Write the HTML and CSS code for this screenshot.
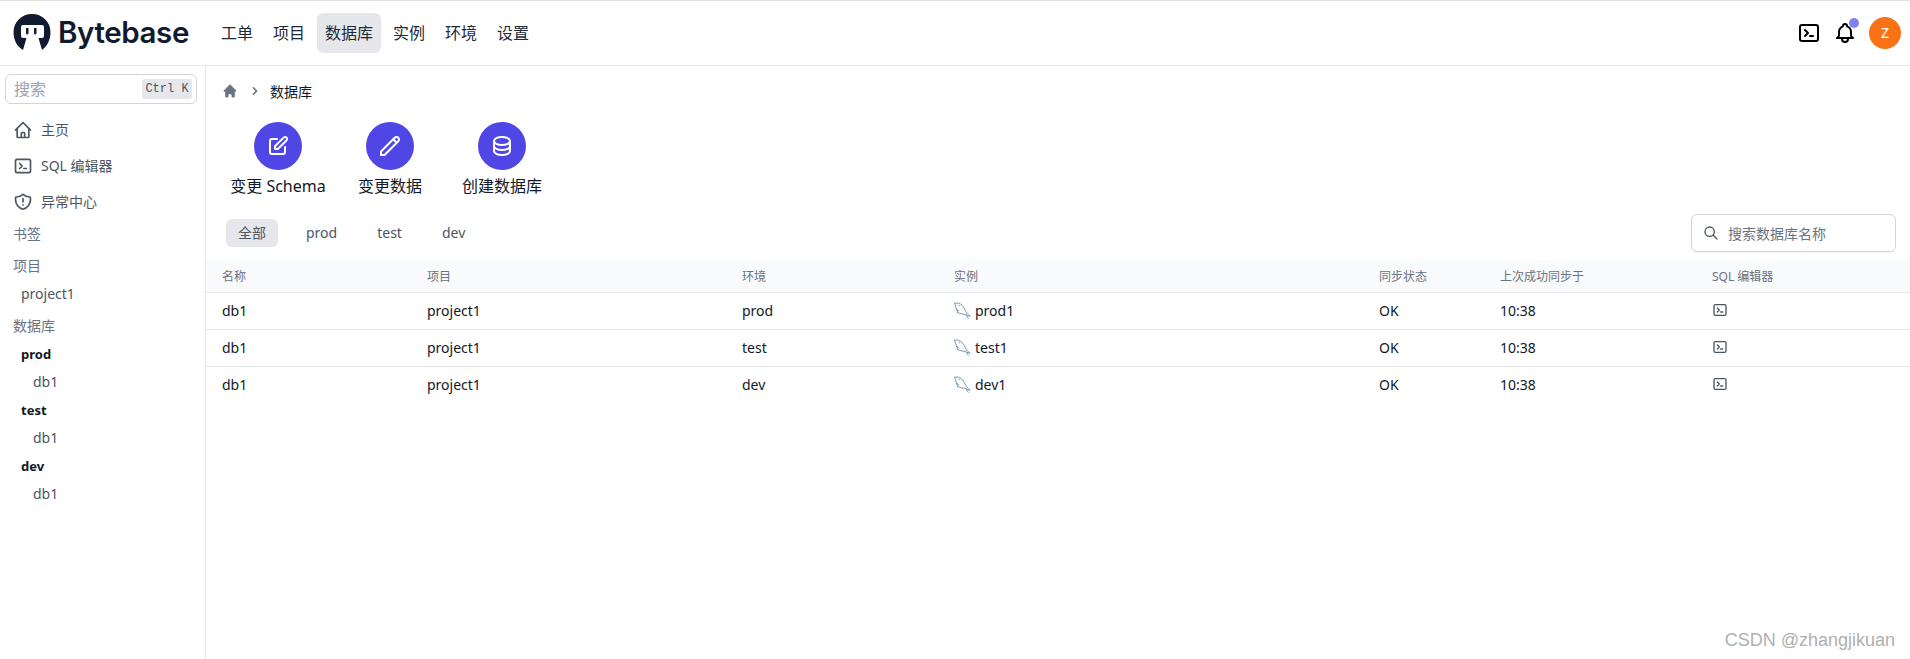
FILE: index.html
```html
<!DOCTYPE html>
<html lang="zh">
<head>
<meta charset="utf-8">
<title>Bytebase</title>
<link rel="stylesheet" href="styles.css">
</head>
<body>
<svg class="sprite" aria-hidden="true">
  <symbol id="i-term" viewBox="0 0 24 24"><path d="M8 9l3 3-3 3m5 0h3M5 20h14a2 2 0 002-2V6a2 2 0 00-2-2H5a2 2 0 00-2 2v12a2 2 0 002 2z"/></symbol>
  <symbol id="i-dolphin" viewBox="0 0 16 16"><path class="dolphin" d="M.6 1.200C3 .4 5.600 1.200 7.600 3.200c1.600 1.600 2.600 3.800 3.600 6 .8 1.600 2.200 2.600 4 4.200-1.400-.2-2.600-.6-3.400-1.200.2 1 .8 2 1.600 3.200M.6 1.200c.6 1.800 1 3.400 1.600 5 .4 1.200 1 2.600 1.400 3.800M3.600 10c1.200.4 2.400 1 3.800 1.200 1.400.2 2.800.4 4.200.9M2.600 6.800c.8.200 1.400.8 1.800 1.600M4.400 3c.2.300.4.500.8.600"/></symbol>
</svg>
<div class="app">
  <header class="topbar">
    <div class="brand">
      <svg class="logo" viewBox="0 0 38 36"><path fill-rule="evenodd" d="M10 36C4 32.500.5 26 .5 18a18.500 18 0 0137 0c0 8-3.500 14.500-8.500 18L25.500 24H29q2 0 2-2V13q0-2-2-2H10q-2 0-2 2v9q0 2 2 2h3.500zM13 14v5q0 1.500 1.200 1.500t1.300-1.500v-5zM21 14v5q0 1.500 1.200 1.500t1.300-1.500v-5z"/></svg>
      <span class="brand-name">Bytebase</span>
    </div>
    <nav class="mainnav">
      <a class="mainnav-item">工单</a>
      <a class="mainnav-item">项目</a>
      <a class="mainnav-item is-active">数据库</a>
      <a class="mainnav-item">实例</a>
      <a class="mainnav-item">环境</a>
      <a class="mainnav-item">设置</a>
    </nav>
    <div class="top-actions">
      <svg class="icon-top icon-term"><use href="#i-term"/></svg>
      <span class="bell">
        <svg class="icon-top" viewBox="0 0 24 24"><path d="M15 17h5l-1.405-1.405A2.032 2.032 0 0118 14.158V11a6.002 6.002 0 00-4-5.659V5a2 2 0 10-4 0v.341C7.670 6.165 6 8.388 6 11v3.159c0 .538-.214 1.055-.595 1.436L4 17h5m6 0v1a3 3 0 11-6 0v-1m6 0H9"/></svg>
        <i class="bell-dot"></i>
      </span>
      <span class="avatar">Z</span>
    </div>
  </header>
  <div class="body">
    <aside class="sidebar">
      <div class="side-search"><span class="side-search-text">搜索</span><kbd class="kbd">Ctrl K</kbd></div>
      <a class="side-link"><svg class="side-icon" viewBox="0 0 24 24"><path d="M3 12l2-2m0 0l7-7 7 7M5 10v10a1 1 0 001 1h3m10-11l2 2m-2-2v10a1 1 0 01-1 1h-3m-6 0a1 1 0 001-1v-4a1 1 0 011-1h2a1 1 0 011 1v4a1 1 0 001 1m-6 0h6"/></svg>主页</a>
      <a class="side-link"><svg class="side-icon"><use href="#i-term"/></svg>SQL 编辑器</a>
      <a class="side-link"><svg class="side-icon" viewBox="0 0 24 24"><path d="M12 8v4m0 3.500h.01M20.618 5.984A11.955 11.955 0 0112 2.944a11.955 11.955 0 01-8.618 3.040A12.020 12.020 0 003 9c0 5.591 3.824 10.290 9 11.622 5.176-1.332 9-6.030 9-11.622 0-1.042-.133-2.052-.382-3.016z"/></svg>异常中心</a>
      <div class="side-tree">
        <div class="side-head side-head-first">书签</div>
        <div class="side-head">项目</div>
        <div class="side-item">project1</div>
        <div class="side-head">数据库</div>
        <div class="side-env">prod</div>
        <div class="side-db">db1</div>
        <div class="side-env">test</div>
        <div class="side-db">db1</div>
        <div class="side-env">dev</div>
        <div class="side-db">db1</div>
      </div>
    </aside>
    <main class="content">
      <div class="crumbs">
        <svg class="crumb-home" viewBox="0 0 20 20"><path d="M10.707 2.293a1 1 0 00-1.414 0l-7 7a1 1 0 001.414 1.414L4 10.414V17a1 1 0 001 1h2a1 1 0 001-1v-2a1 1 0 011-1h2a1 1 0 011 1v2a1 1 0 001 1h2a1 1 0 001-1v-6.586l.293.293a1 1 0 001.414-1.414l-7-7z"/></svg>
        <svg class="crumb-sep" viewBox="0 0 20 20"><path d="M7.293 14.707a1 1 0 010-1.414L10.586 10 7.293 6.707a1 1 0 011.414-1.414l4 4a1 1 0 010 1.414l-4 4a1 1 0 01-1.414 0z"/></svg>
        <span class="crumb-label">数据库</span>
      </div>
      <div class="quick">
        <div class="quick-item"><span class="quick-circle"><svg viewBox="0 0 24 24"><path d="M11 5H6a2 2 0 00-2 2v11a2 2 0 002 2h11a2 2 0 002-2v-5m-1.414-9.414a2 2 0 112.828 2.828L11.828 15H9v-2.828l8.586-8.586z"/></svg></span><span class="quick-label">变更 Schema</span></div>
        <div class="quick-item"><span class="quick-circle"><svg viewBox="0 0 24 24"><path d="M15.232 5.232l3.536 3.536m-2.036-5.036a2.500 2.500 0 113.536 3.536L6.500 21.036H3v-3.572L16.732 3.732z"/></svg></span><span class="quick-label">变更数据</span></div>
        <div class="quick-item"><span class="quick-circle"><svg viewBox="0 0 24 24"><path d="M4 7v10c0 2.210 3.582 4 8 4s8-1.790 8-4V7M4 7c0 2.210 3.582 4 8 4s8-1.790 8-4M4 7c0-2.210 3.582-4 8-4s8 1.790 8 4m0 5c0 2.210-3.582 4-8 4s-8-1.790-8-4"/></svg></span><span class="quick-label">创建数据库</span></div>
      </div>
      <div class="filters">
        <div class="tabs">
          <a class="tab is-active">全部</a>
          <a class="tab">prod</a>
          <a class="tab">test</a>
          <a class="tab">dev</a>
        </div>
        <div class="db-search">
          <svg class="db-search-icon" viewBox="0 0 24 24"><path d="M21 21l-6-6m2-5a7 7 0 11-14 0 7 7 0 0114 0z"/></svg>
          <span class="db-search-text">搜索数据库名称</span>
        </div>
      </div>
      <table class="dbtable">
        <colgroup>
          <col class="c-name"><col class="c-project"><col class="c-env"><col class="c-inst"><col class="c-sync"><col class="c-last"><col class="c-sql">
        </colgroup>
        <thead>
          <tr><th>名称</th><th>项目</th><th>环境</th><th>实例</th><th>同步状态</th><th>上次成功同步于</th><th>SQL 编辑器</th></tr>
        </thead>
        <tbody>
          <tr><td>db1</td><td>project1</td><td>prod</td><td><span class="inst"><svg class="inst-icon"><use href="#i-dolphin"/></svg>prod1</span></td><td>OK</td><td>10:38</td><td><svg class="sql-icon"><use href="#i-term"/></svg></td></tr>
          <tr><td>db1</td><td>project1</td><td>test</td><td><span class="inst"><svg class="inst-icon"><use href="#i-dolphin"/></svg>test1</span></td><td>OK</td><td>10:38</td><td><svg class="sql-icon"><use href="#i-term"/></svg></td></tr>
          <tr><td>db1</td><td>project1</td><td>dev</td><td><span class="inst"><svg class="inst-icon"><use href="#i-dolphin"/></svg>dev1</span></td><td>OK</td><td>10:38</td><td><svg class="sql-icon"><use href="#i-term"/></svg></td></tr>
        </tbody>
      </table>
    </main>
  </div>
  <div class="watermark">CSDN @zhangjikuan</div>
</div>
</body>
</html>
```
FILE: styles.css
```css
* { box-sizing: border-box; }
html, body { margin: 0; height: 100%; background: #fff; overflow: hidden; }
body {
  font-family: "Noto Sans", "Noto Sans CJK SC", sans-serif;
  font-size: 14px;
  color: #111827;
}
.sprite { display: none; }
svg { fill: none; stroke: currentColor; stroke-width: 2; stroke-linecap: round; stroke-linejoin: round; flex: none; display: block; }

.app { position: relative; height: 659px; display: flex; flex-direction: column; border-top: 1px solid #e0e0e0; }

.topbar { height: 65px; flex: none; display: flex; align-items: center; border-bottom: 1px solid #e5e7eb; padding: 0 9px 1px 13px; }
.brand { display: flex; align-items: center; gap: 7px; width: 200px; margin-bottom: 2px; }
.logo { width: 38px; height: 36px; fill: #111a2e; stroke: none; }
.brand-name { font-family: Inter, sans-serif; font-size: 29.5px; line-height: 36px; font-weight: 600; color: #111a2e; letter-spacing: -.4px; }
.mainnav { display: flex; gap: 4px; }
.mainnav-item { padding: 0 8px; height: 40px; line-height: 40px; font-size: 16px; border-radius: 6px; color: #1f2937; }
.mainnav-item.is-active { background: #e5e7eb; }
.top-actions { margin-left: auto; display: flex; align-items: center; }
.icon-top { width: 24px; height: 24px; color: #000; }
.bell { position: relative; margin-left: 12px; }
.bell-dot { position: absolute; top: -3px; right: -2px; width: 10px; height: 10px; border-radius: 50%; background: #8180f0; }
.avatar { width: 32px; height: 32px; margin-left: 12px; border-radius: 50%; background: #f97316; color: #fff; font-size: 14px; line-height: 32px; text-align: center; }

.body { flex: 1; display: flex; min-height: 0; }

.sidebar { width: 206px; flex: none; border-right: 1px solid #e5e7eb; padding: 8px 8px 0 5px; color: #4b5563; }
.side-search { height: 30px; width: 192px; border: 1px solid #d1d5db; border-radius: 6px; display: flex; align-items: center; justify-content: space-between; padding: 0 4px 0 8px; }
.side-search-text { font-size: 16px; line-height: 28px; color: #9ca3af; }
.kbd { font-family: "Liberation Mono", monospace; font-size: 12px; line-height: 20px; background: #e5e7eb; color: #4b5563; border-radius: 3px; width: 50px; text-align: center; white-space: nowrap; }
.side-link { display: flex; align-items: center; gap: 8px; height: 36px; padding-left: 10px; line-height: 36px; font-size: 14px; }
.side-link:first-of-type { margin-top: 8px; }
.side-icon { width: 20px; height: 20px; color: #4b5563; margin-left: -2px; }
.side-tree { line-height: 28px; margin-left: 8px; }
.side-head { height: 28px; margin-top: 4px; color: #6b7280; }
.side-head-first { margin-top: 0; }
.side-item { height: 28px; padding-left: 8px; color: #4b5563; }
.side-env { height: 28px; padding-left: 8px; font-size: 13px; font-weight: 700; color: #111827; }
.side-db { height: 28px; padding-left: 20px; color: #4b5563; }

.content { flex: 1; min-width: 0; display: flex; flex-direction: column; }
.crumbs { display: flex; align-items: center; height: 20px; margin: 15px 0 0 16px; }
.crumb-home { width: 16px; height: 16px; fill: #6b7280; stroke: none; }
.crumb-sep { width: 16px; height: 16px; fill: #6b7280; stroke: none; margin: 0 6px 0 9px; }
.crumb-label { font-size: 14px; color: #111827; margin-left: 1px; }

.quick { display: flex; margin: 21px 0 0 16px; }
.quick-item { width: 112px; display: flex; flex-direction: column; align-items: center; }
.quick-circle { width: 48px; height: 48px; border-radius: 50%; background: #4f46e5; color: #fff; display: flex; align-items: center; justify-content: center; }
.quick-circle svg { width: 24px; height: 24px; }
.quick-label { font-size: 16px; line-height: 24px; margin-top: 4px; color: #111827; white-space: nowrap; }

.filters { display: flex; align-items: center; justify-content: space-between; height: 38px; margin: 16px 14px 8px 20px; }
.tabs { display: flex; gap: 16px; }
.tab { height: 28px; line-height: 28px; padding: 0 12px; border-radius: 6px; color: #4b5563; }
.tab.is-active { background: #e5e7eb; }
.db-search { width: 205px; height: 38px; border: 1px solid #d1d5db; border-radius: 6px; display: flex; align-items: center; gap: 9px; padding-left: 11px; box-shadow: 0 1px 2px rgba(0,0,0,.05); }
.db-search-icon { width: 16px; height: 16px; color: #4b5563; }
.db-search-text { color: #6b7280; }

.dbtable { width: 100%; border-collapse: collapse; table-layout: fixed; }
.c-name { width: 205px; } .c-project { width: 315px; } .c-env { width: 212px; } .c-inst { width: 425px; }
.c-sync { width: 121px; } .c-last { width: 212px; } .c-sql { width: auto; }
.dbtable th { height: 32px; padding: 0 16px; background: #f9fafb; border-bottom: 1px solid #e5e7eb; font-size: 12px; font-weight: 400; color: #6b7280; text-align: left; }
.dbtable td { height: 37px; padding: 0 16px 1px; border-bottom: 1px solid #e5e7eb; color: #111827; }
.dbtable tbody tr:last-child td { border-bottom: 0; }
.inst { display: flex; align-items: center; gap: 4px; }
.inst-icon { width: 17px; height: 17px; }
.dolphin { stroke: #5d87a1; stroke-width: .8; }
.sql-icon { width: 16px; height: 16px; color: #4b5563; }

.watermark { position: absolute; right: 15px; bottom: 8px; font-family: "Liberation Sans", sans-serif; font-size: 18px; line-height: 22px; color: #b0b0b0; }
```
